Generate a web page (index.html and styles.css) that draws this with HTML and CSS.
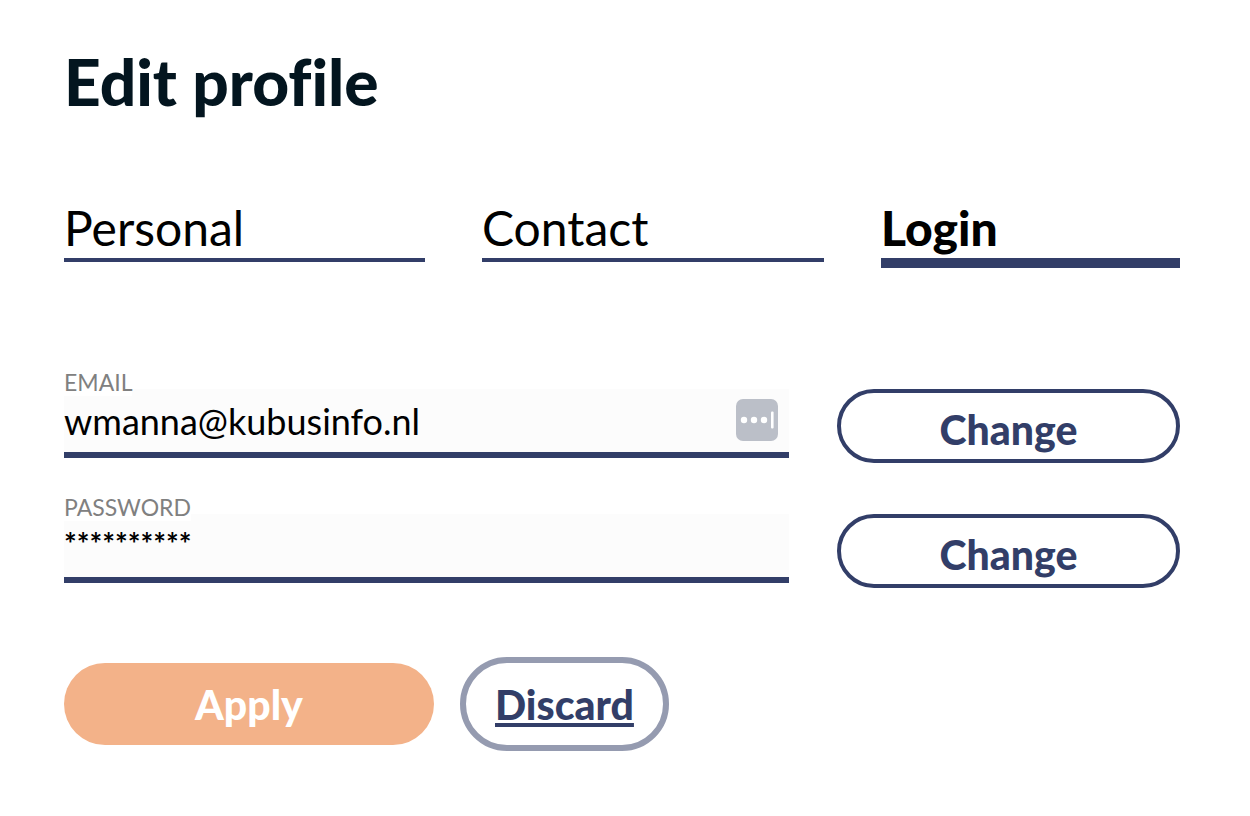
FILE: index.html
```
<!DOCTYPE html>
<html lang="en">
<head>
<meta charset="utf-8">
<meta name="viewport" content="width=device-width, initial-scale=1">
<title>Edit profile</title>
<link rel="stylesheet" href="styles.css">
</head>
<body>
<main class="profile">
  <h1 class="title">Edit profile</h1>
  <nav class="tabs" aria-label="Profile sections">
    <a class="tab tab-personal" href="#personal">Personal</a>
    <a class="tab tab-contact" href="#contact">Contact</a>
    <a class="tab tab-login active" href="#login" aria-current="page">Login</a>
  </nav>
  <form class="form">
    <div class="row">
      <div class="field">
        <label class="label" for="email">EMAIL</label>
        <input class="input" id="email" type="text" value="wmanna@kubusinfo.nl">
        <svg class="key" viewBox="0 0 42 42" aria-hidden="true">
          <rect width="42" height="42" rx="7" fill="#bbbfc8"/>
          <circle cx="8" cy="21" r="3.2" fill="#fff"/>
          <circle cx="18" cy="21" r="3.2" fill="#fff"/>
          <circle cx="28" cy="21" r="3.2" fill="#fff"/>
          <rect x="35" y="12.5" width="2.6" height="17" rx="1" fill="#fff"/>
        </svg>
      </div>
      <button class="change" type="button">Change</button>
    </div>
    <div class="row">
      <div class="field">
        <label class="label" for="password">PASSWORD</label>
        <input class="input input-password" id="password" type="text" value="**********">
      </div>
      <button class="change" type="button">Change</button>
    </div>
    <div class="actions">
      <button class="apply" type="submit">Apply</button>
      <button class="discard" type="button">Discard</button>
    </div>
  </form>
</main>
</body>
</html>
```
FILE: styles.css
```
* {
  box-sizing: border-box;
}

body {
  margin: 0;
  background: #fff;
  color: #000;
  font-family: Lato, "Open Sans", sans-serif;
  font-variant-ligatures: none;
}

.profile {
  padding: 46px 70px 64px 64px;
}

.title {
  margin: 0;
  color: #03151f;
  font-size: 64px;
  line-height: 72px;
  font-weight: 900;
}

.tabs {
  display: flex;
  align-items: flex-start;
  gap: 57px;
  margin-top: 80px;
}

.tab {
  border-bottom: 4px solid #323e68;
  color: #000;
  font-size: 48px;
  line-height: 60px;
  text-decoration: none;
}

.tab-personal {
  flex: 361;
}

.tab-contact {
  flex: 342;
}

.tab-login {
  flex: 299;
}

.active {
  border-bottom-width: 10px;
  font-weight: 900;
}

.form {
  margin-top: 102px;
}

.row {
  display: grid;
  grid-template-columns: 725fr 343fr;
  column-gap: 48px;
  align-items: end;
  margin-bottom: 37px;
}

.field {
  position: relative;
  display: flex;
  flex-direction: column;
  background: linear-gradient(#fff 19px, #fcfcfc 19px);
}

.label {
  align-self: flex-start;
  padding-bottom: 2px;
  background: #fff;
  color: #808080;
  font-size: 23px;
  line-height: 24px;
}

.input {
  width: 100%;
  height: 62px;
  padding: 0 60px 6px 0;
  border: 0;
  border-bottom: 6px solid #323e68;
  border-radius: 0;
  background: transparent;
  color: #000;
  font: inherit;
  font-size: 36px;
}

.input-password {
  padding-bottom: 12px;
  font-size: 30px;
  font-weight: 700;
}

.key {
  position: absolute;
  right: 11px;
  bottom: 17px;
  width: 42px;
  height: 42px;
}

.change,
.apply,
.discard {
  font: inherit;
  font-size: 41px;
  font-weight: 900;
}

.change {
  height: 74px;
  margin-bottom: -5px;
  padding: 6px 0 0;
  border: 4px solid #323e68;
  border-radius: 37px;
  background: #fff;
  color: #323e68;
}

.actions {
  display: flex;
  align-items: center;
  gap: 26px;
  margin-top: 74px;
}

.apply {
  width: 370px;
  height: 82px;
  padding: 0;
  border: 0;
  border-radius: 41px;
  background: #f3b289;
  color: #fff;
}

.discard {
  height: 94px;
  padding: 0 29px;
  border: 6px solid #959bb0;
  border-radius: 47px;
  background: #fff;
  color: #323e68;
  text-decoration: underline;
}
```
